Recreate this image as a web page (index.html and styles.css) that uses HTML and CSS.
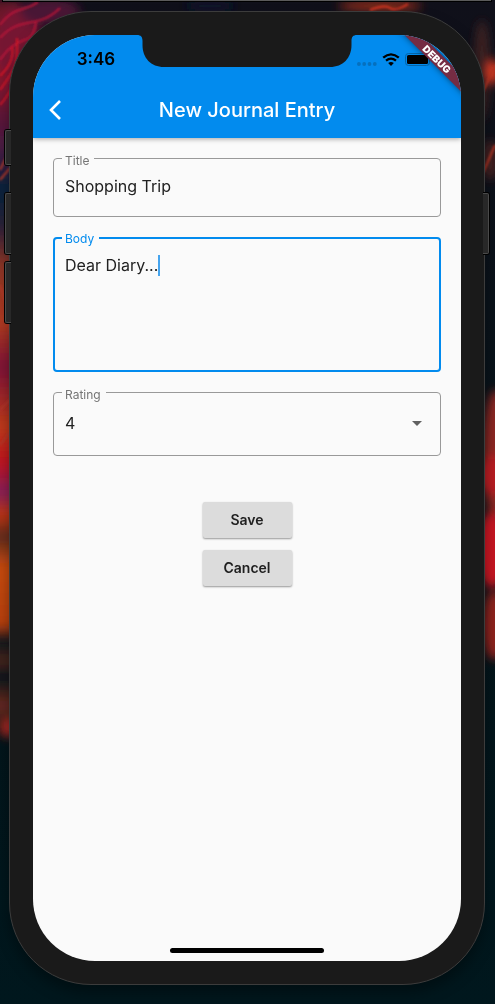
FILE: index.html
```html
<!DOCTYPE html>
<html lang="en">
<head>
<meta charset="utf-8">
<meta name="viewport" content="width=device-width, initial-scale=1">
<title>New Journal Entry</title>
<link rel="stylesheet" href="styles.css">
</head>
<body>
<svg class="wallpaper" viewBox="0 0 495 1004" preserveAspectRatio="none" aria-hidden="true">
  <defs>
    <filter id="soft" x="-100%" y="-50%" width="300%" height="200%"><feGaussianBlur stdDeviation="5"/></filter>
    <filter id="mist" x="-50%" y="-50%" width="200%" height="200%"><feGaussianBlur stdDeviation="1"/></filter>
    <linearGradient id="base" x1="0" y1="0" x2="0" y2="1">
      <stop offset="0" stop-color="#10101a"/>
      <stop offset=".6" stop-color="#04141a"/>
      <stop offset="1" stop-color="#00171d"/>
    </linearGradient>
    <linearGradient id="left" x1="0" y1="0" x2="0" y2="1">
      <stop offset="0" stop-color="#5a1228"/>
      <stop offset=".08" stop-color="#a01128"/>
      <stop offset=".16" stop-color="#5c1238"/>
      <stop offset=".2" stop-color="#4a1e44"/>
      <stop offset=".26" stop-color="#04203c"/>
      <stop offset=".31" stop-color="#2c2038"/>
      <stop offset=".36" stop-color="#8a3526"/>
      <stop offset=".44" stop-color="#b03a20"/>
      <stop offset=".5" stop-color="#7e1237"/>
      <stop offset=".58" stop-color="#c03a1a"/>
      <stop offset=".63" stop-color="#c01220"/>
      <stop offset=".67" stop-color="#85205a"/>
      <stop offset=".7" stop-color="#c03512"/>
      <stop offset=".73" stop-color="#5c2a1c"/>
      <stop offset=".77" stop-color="#c84a10"/>
      <stop offset=".85" stop-color="#b84010"/>
      <stop offset=".87" stop-color="#04151c"/>
      <stop offset=".9" stop-color="#4a2420"/>
      <stop offset=".92" stop-color="#04151c"/>
      <stop offset=".96" stop-color="#6a2a20"/>
      <stop offset="1" stop-color="#04151c"/>
    </linearGradient>
  </defs>
  <rect width="495" height="1004" fill="url(#base)"/>
  <g filter="url(#soft)">
    <rect x="-20" y="0" width="40" height="735" fill="url(#left)"/>
    <ellipse cx="18" cy="45" rx="24" ry="40" fill="#741530"/>
    <ellipse cx="50" cy="12" rx="30" ry="14" fill="#4a1434"/>
    <ellipse cx="9" cy="728" rx="6" ry="10" fill="#b52b22"/>
    <ellipse cx="210" cy="6" rx="25" ry="6" fill="#08132b"/>
    <ellipse cx="380" cy="6" rx="42" ry="6" fill="#84291b"/>
    <ellipse cx="482" cy="70" rx="8" ry="50" fill="#3c2022"/>
    <ellipse cx="493" cy="72" rx="6" ry="12" fill="#e33d24"/>
    <ellipse cx="490" cy="160" rx="8" ry="20" fill="#472322"/>
    <ellipse cx="496" cy="455" rx="14" ry="65" fill="#8b2820"/>
    <ellipse cx="492" cy="475" rx="14" ry="20" fill="#b81b20"/>
    <ellipse cx="492" cy="550" rx="16" ry="38" fill="#c61720"/>
    <ellipse cx="494" cy="625" rx="12" ry="35" fill="#8d221e"/>
  </g>
  <g filter="url(#mist)" fill="none" stroke-width="2">
    <path d="M0 25C15 5 25 12 38 2M0 38C20 15 38 30 60 8M0 60C20 30 32 50 36 22" stroke="#b71838"/>
    <path d="M0 90C16 68 18 65 17 38M0 105C14 90 18 72 24 65M0 76C10 66 14 58 12 46" stroke="#d21528"/>
    <path d="M0 170L10 150M0 180L10 168M0 285C5 300 8 310 10 335M0 410L10 400M0 445L10 432" stroke="#b33829"/>
    <path d="M370 10Q385 4 390 8T408 4" stroke="#d93622"/>
    <path d="M477 105L495 65M483 173L495 145" stroke="#b33421"/>
  </g>
  <rect x="2" y="0" width="490" height="2" fill="#000"/>
  <rect x="3" y="0" width="488" height="1" fill="#5b5b5b"/>
</svg>

<div class="phone">
  <span class="key key-mute"></span>
  <span class="key key-up"></span>
  <span class="key key-down"></span>
  <span class="key key-power"></span>

  <div class="screen">
    <header class="app-bar">
      <div class="status">
        <div class="time">3:46</div>
        <svg class="notch" width="220" height="32" viewBox="0 0 220 32" aria-hidden="true">
          <path d="M0 0C4 0 5.500 2 5.500 6V10C5.500 23 14 32 27 32H193C206 32 214.500 23 214.500 10V6C214.500 2 216 0 220 0Z" fill="#1a1a1a"/>
        </svg>
        <div class="signals">
          <svg width="20" height="12" viewBox="0 0 20 12" aria-hidden="true">
            <g fill="#0670bd"><circle cx="1.900" cy="10" r="1.900"/><circle cx="7.200" cy="10" r="1.900"/><circle cx="12.500" cy="10" r="1.900"/><circle cx="17.800" cy="10" r="1.900"/></g>
          </svg>
          <svg width="18" height="13" viewBox="0 0 18 13" aria-hidden="true">
            <path d="M1.200 4.700Q9-2 16.800 4.700M4 7.700Q9 3.600 14 7.700" fill="none" stroke="#000" stroke-width="2.300"/>
            <path d="M6.200 10Q9 7.900 11.800 10L9 12.900Z"/>
          </svg>
          <svg width="28" height="13" viewBox="0 0 28 13" aria-hidden="true">
            <rect x=".5" y=".5" width="24" height="12" rx="3" fill="none" stroke="#0565a8"/>
            <rect x="2" y="2" width="21" height="9" rx="1.500"/>
            <path d="M26 4.500Q28 6.500 26 8.500Z" fill="#0565a8"/>
          </svg>
        </div>
      </div>
      <div class="toolbar">
        <button class="back" type="button" aria-label="Back">
          <svg width="14" height="20" viewBox="0 0 14 20" aria-hidden="true"><path d="M12 1L3 10L12 19" fill="none" stroke="#fff" stroke-width="2.600"/></svg>
        </button>
        <h1>New Journal Entry</h1>
      </div>
      <div class="ribbon">DEBUG</div>
    </header>

    <main>
      <form class="entry">
        <div class="field">
          <label for="title">Title</label>
          <input id="title" type="text" value="Shopping Trip">
        </div>
        <div class="field active">
          <label for="body">Body</label>
          <textarea id="body" rows="5">Dear Diary...</textarea>
          <span class="caret"></span>
        </div>
        <div class="field">
          <label for="rating">Rating</label>
          <select id="rating"><option>1</option><option>2</option><option>3</option><option selected>4</option></select>
          <svg class="arrow" width="10" height="5" viewBox="0 0 10 5" aria-hidden="true"><path d="M0 0H10L5 5Z" fill="#616161"/></svg>
        </div>
        <div class="actions">
          <button type="button">Save</button>
          <button type="button">Cancel</button>
        </div>
      </form>
    </main>
    <div class="home"></div>
  </div>
</div>
</body>
</html>
```
FILE: styles.css
```css
* { box-sizing: border-box; }

body {
  margin: 0;
  min-height: 100vh;
  padding: 11px 10px 19px 9px;
  display: flex;
  background: #00171d;
  font-family: Inter, Roboto, sans-serif;
  color: #212121;
}

.wallpaper {
  position: fixed;
  inset: 0;
  width: 100%;
  height: 100%;
  z-index: -1;
}

.phone {
  position: relative;
  flex: 1;
  display: flex;
  padding: 23px;
  border: 1px solid #3c3c3c;
  border-radius: 82px;
  background: #1a1a1a;
  box-shadow: 0 8px 14px rgba(0, 0, 0, .35);
}

.key {
  position: absolute;
  left: -5px;
  width: 6px;
  height: 61px;
  border: 1px solid #4a4a4a;
  border-right: 0;
  border-radius: 2px 0 0 2px;
  background: #282828;
  box-shadow: 0 0 0 1px #000;
  clip-path: inset(-1px 0 -1px -1px);
}
.key-mute { top: 118px; height: 35px; }
.key-up { top: 181px; }
.key-down { top: 250px; }
.key-power {
  top: 181px;
  left: auto;
  right: -5px;
  transform: scaleX(-1);
}

.screen {
  position: relative;
  flex: 1;
  display: flex;
  flex-direction: column;
  overflow: hidden;
  border-radius: 62px;
  background: #fafafa;
}

.app-bar {
  position: relative;
  background: #028bee;
  box-shadow: 0 1px 5px rgba(0, 0, 0, .35);
}

.status {
  display: grid;
  grid-template-columns: 1fr 220px 1fr;
  height: 47px;
}
.time {
  padding: 2px 0 0 22px;
  text-align: center;
  font-size: 17px;
  line-height: 45px;
  font-weight: 600;
  color: #000;
}
.notch { display: block; }
.signals {
  display: flex;
  align-items: center;
  gap: 5px;
  padding: 2px 0 0;
}
.signals svg { flex: none; }

.toolbar {
  display: grid;
  grid-template-columns: 44px 1fr 44px;
  align-items: center;
  height: 56px;
}
.back {
  display: flex;
  justify-content: center;
  padding: 0;
  border: 0;
  background: none;
}
h1 {
  margin: 0;
  text-align: center;
  font-size: 20px;
  line-height: 24px;
  font-weight: 500;
  color: #fff;
}

.ribbon {
  position: absolute;
  top: 18px;
  right: -26px;
  width: 100px;
  transform: rotate(45deg);
  background: #752c43;
  box-shadow: 0 0 6px rgba(0, 0, 0, .5);
  text-align: center;
  font-size: 10px;
  line-height: 12px;
  font-weight: 900;
  color: #fff;
}

main {
  flex: 1;
  padding: 20px;
}
.entry {
  display: flex;
  flex-direction: column;
  gap: 20px;
}
.field {
  position: relative;
  display: flex;
  border: 1px solid #999;
  border-radius: 4px;
}
.field label {
  position: absolute;
  top: -5px;
  left: 8px;
  padding: 0 5px 0 3px;
  background: #fafafa;
  font-size: 12px;
  line-height: 14px;
  color: #757575;
}
.field input,
.field textarea,
.field select {
  flex: 1;
  min-width: 0;
  margin: 0;
  border: 0;
  outline: 0;
  background: none;
  appearance: none;
  resize: none;
  overflow: hidden;
  font-family: inherit;
  font-size: 16px;
  line-height: 20px;
  color: #212121;
}
.field input { padding: 17px 11px 20px; }
.field textarea { padding: 16px 10px 15px; }
.field select { padding: 20px 11px 22px; }

.active { border: 2px solid #028bee; }
.active label {
  top: -7px;
  left: 7px;
  color: #028bee;
}
.caret {
  position: absolute;
  top: 16px;
  left: 103px;
  width: 2px;
  height: 21px;
  background: #45a4ee;
}
.arrow {
  position: absolute;
  right: 18px;
  top: 28px;
}

.actions {
  display: flex;
  flex-direction: column;
  align-items: center;
  gap: 12px;
  padding-top: 26px;
}
.actions button {
  width: 89px;
  height: 36px;
  padding: 0 0 2px;
  border: 0;
  border-radius: 2px;
  background: #dcdcdc;
  box-shadow: 0 1px 2px rgba(0, 0, 0, .4);
  font-family: inherit;
  font-size: 14px;
  font-weight: 600;
  color: #212121;
}

.home {
  align-self: center;
  width: 36%;
  height: 5px;
  margin-bottom: 8px;
  border-radius: 3px;
  background: #000;
}
```
